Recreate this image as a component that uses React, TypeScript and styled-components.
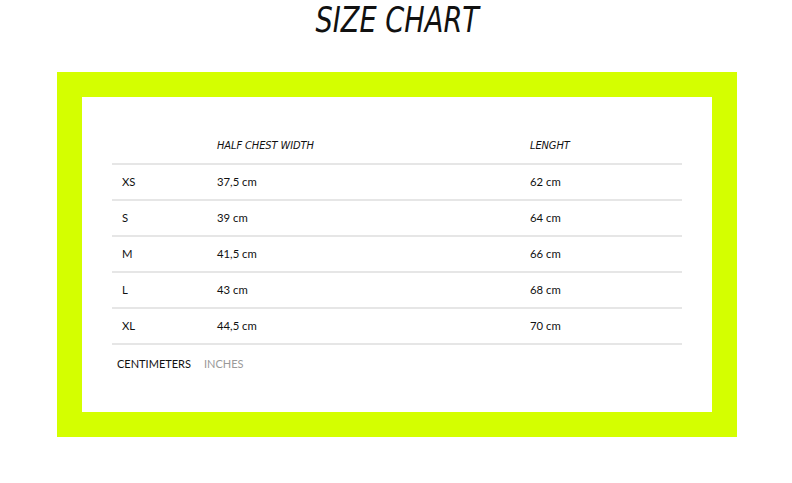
import React from "react";
import styled, { createGlobalStyle } from "styled-components";

const Global = createGlobalStyle`
  html, body { margin: 0; padding: 0; background: #fff; }
  body { font-family: Lato, "Liberation Sans", sans-serif; color: #111; }
`;

const Page = styled.div`
  width: 792px;
  padding-left: 2px;
  box-sizing: border-box;
  display: flex;
  flex-direction: column;
  align-items: center;
`;

const TitleBar = styled.div`
  height: 48px;
  display: flex;
  justify-content: center;
  align-items: flex-start;
`;

const Title = styled.h1`
  margin: 0;
  display: inline-block;
  line-height: 40px;
  font-family: "DejaVu Sans Condensed", "DejaVu Sans", sans-serif;
  font-stretch: condensed;
  font-style: italic;
  font-weight: 400;
  font-size: 36px;
  color: #111;
  transform: scaleX(0.84);
  white-space: nowrap;
`;

const Frame = styled.div`
  margin-top: 24px;
  width: 570px;
  border: 25px solid #d4ff00;
  background: #fff;
  padding: 32px 30px 42px 30px;
  box-sizing: content-box;
  display: flex;
  flex-direction: column;
`;

const Table = styled.div`
  display: flex;
  flex-direction: column;
`;

const Row = styled.div`
  display: grid;
  grid-template-columns: 105px 313px 1fr;
  height: 36px;
  align-items: center;
  border-bottom: 2px solid #e6e6e6;
  box-sizing: border-box;
  font-size: 11.3px;
  color: #111;
`;

const HeadCell = styled.div`
  font-family: "DejaVu Sans Condensed", "DejaVu Sans", sans-serif;
  font-stretch: condensed;
  font-style: italic;
  font-size: 11px;
  letter-spacing: -0.1px;
  margin-top: -2px;
`;

const Cell = styled.div<{ $first?: boolean }>`
  padding-left: ${(p) => (p.$first ? "10px" : "0")};
  margin-top: -1px;
`;

const Units = styled.div`
  display: flex;
  gap: 13px;
  padding: 12px 0 0 5px;
  font-size: 11px;
`;

const Unit = styled.span<{ $active?: boolean }>`
  color: ${(p) => (p.$active ? "#111" : "#9a9a9a")};
`;

const rows = [
  ["XS", "37,5 cm", "62 cm"],
  ["S", "39 cm", "64 cm"],
  ["M", "41,5 cm", "66 cm"],
  ["L", "43 cm", "68 cm"],
  ["XL", "44,5 cm", "70 cm"],
];

export default function App() {
  return (
    <Page>
      <Global />
      <TitleBar>
        <Title>SIZE CHART</Title>
      </TitleBar>
      <Frame>
        <Table>
          <Row>
            <div />
            <HeadCell>HALF CHEST WIDTH</HeadCell>
            <HeadCell>LENGHT</HeadCell>
          </Row>
          {rows.map((r) => (
            <Row key={r[0]}>
              <Cell $first>{r[0]}</Cell>
              <Cell>{r[1]}</Cell>
              <Cell>{r[2]}</Cell>
            </Row>
          ))}
        </Table>
        <Units>
          <Unit $active>CENTIMETERS</Unit>
          <Unit>INCHES</Unit>
        </Units>
      </Frame>
    </Page>
  );
}
